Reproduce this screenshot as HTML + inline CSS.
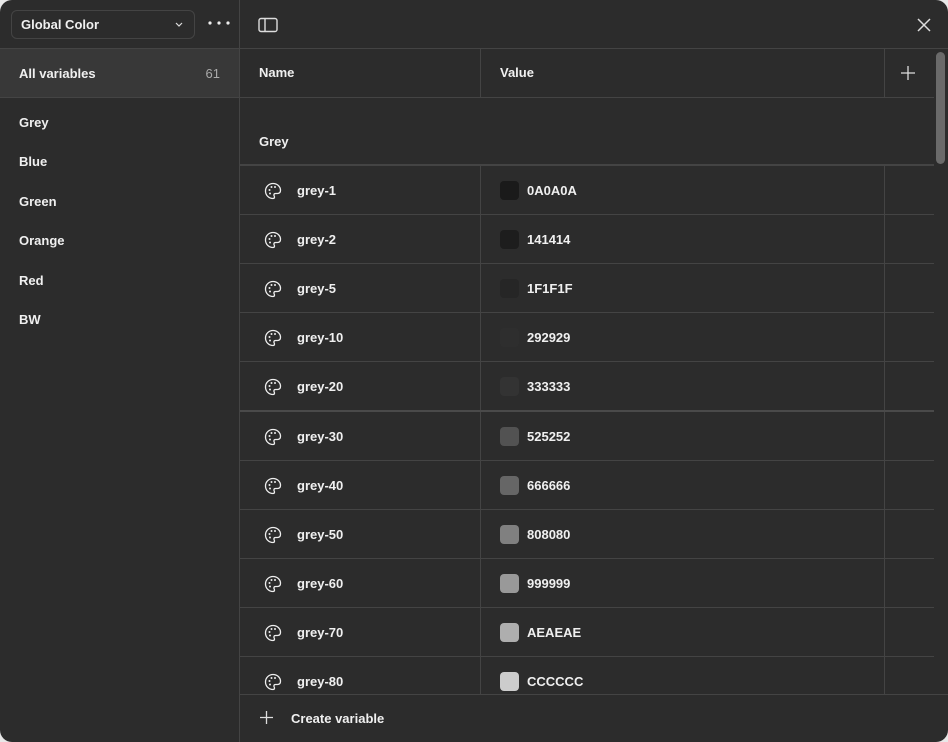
<!DOCTYPE html><html><head><style>
*{margin:0;padding:0;box-sizing:border-box}
body{width:948px;height:742px;background:#e8e8e8;font-family:"Liberation Sans",sans-serif;font-weight:bold;color:#f0f0f0;font-size:13px;overflow:hidden}
.win{position:absolute;left:0;top:0;width:948px;height:742px;background:#2c2c2c;border-radius:12px;overflow:hidden}
.side{position:absolute;left:0;top:0;width:240px;height:742px;border-right:1px solid #444}
.sel{position:absolute;left:11px;top:10px;width:184px;height:29px;border:1px solid #444;border-radius:6px;padding:6px 9px;font-size:13px}
.av{position:absolute;left:0;top:48px;width:239px;height:50px;background:#383838;border-top:1px solid #444;border-bottom:1px solid #444;padding:17px 19px}
.si{position:absolute;left:19px}
.t{position:absolute}
.hl{position:absolute;background:#444;height:1px}
.vl{position:absolute;background:#444;width:1px}
.sw{position:absolute;left:500px;width:19px;height:19px;border-radius:4px}
</style></head><body><div class="win">
<div class="side">
<div class="sel">Global Color<svg style="position:absolute;right:11px;top:11px" width="8" height="5"><path d="M1 1L4 4L7 1" fill="none" stroke="#ddd" stroke-width="1.2"/></svg></div>
<svg style="position:absolute;left:208px;top:21px" width="22" height="4"><circle cx="2" cy="2" r="1.6" fill="#eee"/><circle cx="11" cy="2" r="1.6" fill="#eee"/><circle cx="20" cy="2" r="1.6" fill="#eee"/></svg>
<div class="av">All variables<span style="position:absolute;right:19px;color:#aaa;font-weight:normal">61</span></div>
<div class="si" style="top:115px">Grey</div>
<div class="si" style="top:154px">Blue</div>
<div class="si" style="top:194px">Green</div>
<div class="si" style="top:233px">Orange</div>
<div class="si" style="top:273px">Red</div>
<div class="si" style="top:312px">BW</div>
</div>
<svg style="position:absolute;left:258px;top:17px" width="20" height="16"><rect x="1" y="1.5" width="18" height="13" rx="2" fill="none" stroke="#ddd" stroke-width="1.4"/><line x1="7" y1="2" x2="7" y2="14" stroke="#ddd" stroke-width="1.4"/></svg>
<svg style="position:absolute;left:917px;top:18px" width="14" height="14"><path d="M1 1L13 13M13 1L1 13" stroke="#ddd" stroke-width="1.5"/></svg>
<div class="hl" style="left:240px;top:48px;width:708px"></div>
<div class="hl" style="left:240px;top:97px;width:694px"></div>
<div class="t" style="left:259px;top:65px">Name</div>
<div class="t" style="left:500px;top:65px">Value</div>
<svg style="position:absolute;left:901px;top:66px" width="14" height="14"><path d="M7 0V14M0 7H14" stroke="#ddd" stroke-width="1.3"/></svg>
<div class="vl" style="left:480px;top:48px;height:50px"></div>
<div class="vl" style="left:884px;top:48px;height:50px"></div>
<div class="t" style="left:259px;top:134px">Grey</div>
<div class="hl" style="left:240px;top:164px;width:694px;height:2px"></div>
<div class="vl" style="left:480px;top:166px;height:528px"></div>
<div class="vl" style="left:884px;top:166px;height:528px"></div>
<div style="position:absolute;left:936px;top:52px;width:9px;height:112px;background:#6a6a6a;border-radius:5px"></div>
<div id="rows"></div>
<div class="hl" style="left:240px;top:694px;width:708px"></div>
<svg style="position:absolute;left:260px;top:711px" width="13" height="13"><path d="M6.5 0V13M0 6.5H13" stroke="#ddd" stroke-width="1.3"/></svg>
<div class="t" style="left:291px;top:711px">Create variable</div>
</div>
<script>
var d=[["grey-1","0A0A0A","#1a1a1a"],["grey-2","141414","#1d1d1d"],["grey-5","1F1F1F","#262626"],["grey-10","292929","#2e2e2e"],["grey-20","333333","#333"],["grey-30","525252","#525252"],["grey-40","666666","#666"],["grey-50","808080","#808080"],["grey-60","999999","#999"],["grey-70","AEAEAE","#aeaeae"],["grey-80","CCCCCC","#ccc"]];
var h="";d.forEach(function(r,i){var y=166+i*49.1;
h+='<svg style="position:absolute;left:264px;top:'+(y+16)+'px" width="18" height="18" viewBox="0 0 18 18"><path d="M9 1.5C4.8 1.5 1.5 4.8 1.5 9s3.3 7.5 7.5 7.5c1 0 1.5-.7 1.5-1.5 0-.8-.6-1.2-.6-2 0-.9.7-1.5 1.6-1.5h2c2 0 3-1.3 3-3.2C16.5 4.6 13.2 1.5 9 1.5z" fill="none" stroke="#eee" stroke-width="1.3"/><circle cx="5.5" cy="8" r="1" fill="#eee"/><circle cx="7.5" cy="5" r="1" fill="#eee"/><circle cx="11" cy="5" r="1" fill="#eee"/><circle cx="6" cy="11.5" r="1" fill="#eee"/></svg>';
h+='<div class="t" style="left:297px;top:'+(y+17)+'px">'+r[0]+'</div>';
h+='<div class="sw" style="top:'+(y+15)+'px;background:'+r[2]+'"></div>';
h+='<div class="t" style="left:527px;top:'+(y+17)+'px">'+r[1]+'</div>';
if(i<10)h+='<div class="hl" style="left:240px;top:'+(y+48)+'px;width:694px'+(i==4?';height:2px;background:#4a4a4a':'')+'"></div>';});
document.getElementById("rows").innerHTML=h;
</script></body></html>
